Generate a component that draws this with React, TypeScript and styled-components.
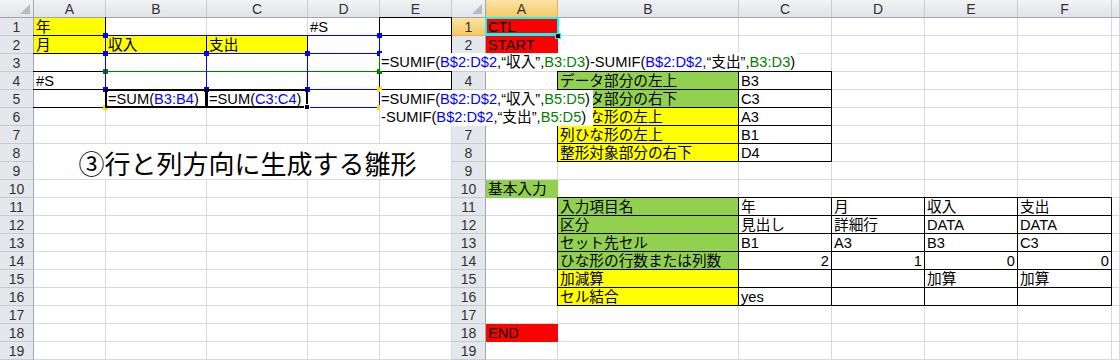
import { ReactNode } from "react";
import styled, { createGlobalStyle, css } from "styled-components";

const GRID = "#d9d9d9";
const YEL = "#ffff00";
const GRN = "#92d050";
const RED = "#ff0000";
const BLUE = "#0000ff";
const GREEN = "#007f00";
const ROW_H = 18;
const ROWS = 19;

const GlobalStyle = createGlobalStyle`
  * { box-sizing: border-box; }
  html, body { margin: 0; padding: 0; background: #fff; }
  body { font-family: "Liberation Sans", "Noto Sans CJK JP", sans-serif; }
`;

type CellDef = {
  text?: ReactNode;
  fill?: string;
  edges?: string;
  heavy?: boolean;
  right?: boolean;
  span?: [number, number];
  title?: boolean;
};

type Rect = { left: number; top: number; width: number; height: number };

const Page = styled.div`
  position: relative;
  display: flex;
  width: 1120px;
  height: 360px;
  overflow: hidden;
  background: #fff;
`;

const SheetFrame = styled.div<{ $cols: number[] }>`
  position: relative;
  flex: none;
  display: grid;
  grid-template-columns: ${({ $cols }) => $cols.map((w) => `${w}px`).join(" ")};
  grid-template-rows: repeat(${ROWS + 1}, ${ROW_H}px);
  width: ${({ $cols }) => $cols.reduce((a, b) => a + b, 0)}px;
  height: 360px;
  overflow: hidden;
`;

const Corner = styled.div`
  grid-column: 1;
  grid-row: 1;
  display: flex;
  align-items: flex-end;
  justify-content: flex-end;
  padding: 0 3px 3px 0;
  background: linear-gradient(#f2f3f5, #e2e5e9);
  border-right: 1px solid #9ea6b1;
  border-bottom: 1px solid #9ea6b1;
`;

const CornerMark = styled.span`
  width: 0;
  height: 0;
  border-left: 10px solid transparent;
  border-bottom: 10px solid #b7bcc3;
`;

const ColHead = styled.div<{ $col: number; $active?: boolean }>`
  grid-column: ${({ $col }) => $col};
  grid-row: 1;
  display: flex;
  align-items: center;
  justify-content: center;
  background: ${({ $active }) =>
    $active ? "linear-gradient(#fbe3a6, #f5c965)" : "linear-gradient(#f1f3f5, #e0e3e8)"};
  border-right: 1px solid ${({ $active }) => ($active ? "#e3b453" : "#c6cbd2")};
  border-bottom: 1px solid ${({ $active }) => ($active ? "#dba545" : "#9ea6b1")};
  color: #333;
  font-size: 14px;
  overflow: hidden;
`;

const RowHead = styled.div<{ $row: number; $active?: boolean }>`
  grid-column: 1;
  grid-row: ${({ $row }) => $row};
  display: flex;
  align-items: center;
  justify-content: center;
  background: ${({ $active }) =>
    $active ? "linear-gradient(#fbe3a6, #f5c965)" : "#e4e7eb"};
  border-right: 1px solid ${({ $active }) => ($active ? "#dba545" : "#9ea6b1")};
  border-bottom: 1px solid ${({ $active }) => ($active ? "#e3b453" : "#c6cbd2")};
  color: #333;
  font-size: 14px;
`;

const edgeWidths = (edges: string) =>
  ["t", "r", "b", "l"].map((e) => (edges.includes(e) ? "1px" : "0")).join(" ");

const Cell = styled.div<{
  $col: number;
  $row: number;
  $sc: number;
  $sr: number;
  $fill?: string;
  $edges?: string;
  $heavy?: boolean;
  $right?: boolean;
  $title?: boolean;
}>`
  position: relative;
  grid-column: ${({ $col, $sc }) => `${$col} / span ${$sc}`};
  grid-row: ${({ $row, $sr }) => `${$row} / span ${$sr}`};
  display: flex;
  align-items: ${({ $title }) => ($title ? "center" : "flex-end")};
  justify-content: ${({ $title, $right }) =>
    $title ? "center" : $right ? "flex-end" : "flex-start"};
  padding: 0 2px;
  background: ${({ $fill }) => $fill ?? "#fff"};
  border-right: 1px solid ${({ $fill }) => $fill ?? GRID};
  border-bottom: 1px solid ${({ $fill }) => $fill ?? GRID};
  color: #000;
  font-size: 14.67px;
  line-height: 15px;
  white-space: nowrap;

  ${({ $title }) =>
    $title &&
    css`
      font-family: "Noto Sans CJK JP", sans-serif;
      font-size: 26px;
      line-height: 30px;
      padding: 2px 0 0 10px;
    `}

  ${({ $edges, $heavy }) =>
    ($edges || $heavy) &&
    css`
      &::after {
        content: "";
        position: absolute;
        left: -1px;
        top: -1px;
        right: -1px;
        bottom: -1px;
        z-index: ${$heavy ? 4 : 2};
        border: solid #000;
        border-width: ${$heavy ? "2px" : edgeWidths($edges ?? "")};
        pointer-events: none;
      }
    `}
`;

const RangeBox = styled.div<{ $color: string }>`
  position: absolute;
  z-index: 3;
  border: 1px solid ${({ $color }) => $color};
  pointer-events: none;
`;

const Handle = styled.span<{ $color: string; $x: "left" | "right"; $y: "top" | "bottom" }>`
  position: absolute;
  width: 5px;
  height: 5px;
  background: ${({ $color }) => $color};
  ${({ $x }) => $x}: -3px;
  ${({ $y }) => $y}: -3px;
`;

const Selection = styled.div`
  position: absolute;
  z-index: 5;
  border: 2px solid #00ffff;
  border-bottom-width: 3px;
  pointer-events: none;
`;

const FillHandle = styled.span<{ $ring?: string }>`
  position: absolute;
  z-index: 6;
  width: 6px;
  height: 6px;
  background: #000;
  border: 1px solid ${({ $ring }) => $ring ?? "#fff"};
`;

const FormulaBox = styled.div<{ $top: number }>`
  position: absolute;
  z-index: 10;
  left: 380px;
  top: ${({ $top }) => $top}px;
  padding: 0 3px 0 1px;
  background: #fff;
  color: #000;
  font-size: 14.67px;
  line-height: 18px;
  white-space: nowrap;
`;

const Ref = styled.span<{ $tone: "blue" | "green" }>`
  color: ${({ $tone }) => ($tone === "blue" ? BLUE : GREEN)};
`;

const parseKey = (key: string) => ({
  col: key.charCodeAt(0) - 64,
  row: Number(key.slice(1)),
});

const cellRect = (widths: number[], c1: number, r1: number, c2: number, r2: number): Rect => {
  const x = (c: number) => widths.slice(0, c).reduce((a, b) => a + b, 0) - 1;
  const left = x(c1);
  const right = x(c2 + 1);
  const top = ROW_H + (r1 - 1) * ROW_H - 1;
  const bottom = ROW_H + r2 * ROW_H - 1;
  return { left, top, width: right - left + 1, height: bottom - top + 1 };
};

type SheetProps = {
  widths: number[];
  labels: string[];
  cells: Record<string, CellDef>;
  activeCol?: number;
  activeRow?: number;
  children?: ReactNode;
};

const Sheet = ({ widths, labels, cells, activeCol, activeRow, children }: SheetProps) => {
  const covered = new Set<string>();
  Object.entries(cells).forEach(([key, def]) => {
    if (!def.span) return;
    const { col, row } = parseKey(key);
    for (let dc = 0; dc < def.span[0]; dc++)
      for (let dr = 0; dr < def.span[1]; dr++)
        if (dc || dr) covered.add(`${col + dc}:${row + dr}`);
  });

  const items: ReactNode[] = [];
  for (let r = 1; r <= ROWS; r++) {
    items.push(
      <RowHead key={`rh${r}`} $row={r + 1} $active={activeRow === r}>
        {r}
      </RowHead>
    );
    labels.forEach((label, i) => {
      const c = i + 1;
      if (covered.has(`${c}:${r}`)) return;
      const def = cells[`${label}${r}`] ?? {};
      items.push(
        <Cell
          key={`${label}${r}`}
          $col={c + 1}
          $row={r + 1}
          $sc={def.span?.[0] ?? 1}
          $sr={def.span?.[1] ?? 1}
          $fill={def.fill}
          $edges={def.edges}
          $heavy={def.heavy}
          $right={def.right}
          $title={def.title}
        >
          {def.text}
        </Cell>
      );
    });
  }

  return (
    <SheetFrame $cols={widths}>
      <Corner>
        <CornerMark />
      </Corner>
      {labels.map((label, i) => (
        <ColHead key={label} $col={i + 2} $active={activeCol === i + 1}>
          {widths[i + 1] > 20 ? label : null}
        </ColHead>
      ))}
      {items}
      {children}
    </SheetFrame>
  );
};

const Range = ({ rect, color, corner }: { rect: Rect; color: string; corner?: string }) => (
  <RangeBox $color={color} style={rect}>
    <Handle $color={corner ?? color} $x='left' $y='top' />
    <Handle $color={corner ?? color} $x='right' $y='top' />
    <Handle $color={corner ?? color} $x='left' $y='bottom' />
    <Handle $color={corner ?? color} $x='right' $y='bottom' />
  </RangeBox>
);

const LEFT_W = [34, 72, 101, 101, 72, 72];
const LEFT_L = ["A", "B", "C", "D", "E"];
const RIGHT_W = [34, 72, 181, 93, 93, 93, 94, 8];
const RIGHT_L = ["A", "B", "C", "D", "E", "F", "G"];

const box = "trbl";

const leftCells: Record<string, CellDef> = {
  A1: { text: "年", fill: YEL, edges: "rb" },
  A2: { text: "月", fill: YEL, edges: "trb" },
  A3: { edges: "trb" },
  A4: { text: "#S", edges: "trb" },
  A5: { edges: "trb" },
  B2: { text: "収入", fill: YEL, edges: box },
  C2: { text: "支出", fill: YEL, edges: box },
  D1: { text: "#S", edges: "r" },
  D2: { edges: box },
  B3: { edges: box },
  C3: { edges: box },
  D3: { edges: box },
  B4: { edges: box },
  C4: { edges: box },
  D4: { edges: box },
  B5: {
    text: (
      <>
        =SUM(<Ref $tone='blue'>B3:B4</Ref>)
      </>
    ),
    heavy: true,
  },
  C5: {
    text: (
      <>
        =SUM(<Ref $tone='blue'>C3:C4</Ref>)
      </>
    ),
    heavy: true,
  },
  D5: { edges: box },
  E1: { edges: box },
  E2: { edges: box },
  E3: { edges: box },
  E4: { edges: box },
  E5: { edges: box },
  A8: { text: "③行と列方向に生成する雛形", span: [5, 2], title: true },
};

const settings: [string, string, string][] = [
  ["データ部分の左上", GRN, "B3"],
  ["データ部分の右下", GRN, "C3"],
  ["行ひな形の左上", YEL, "A3"],
  ["列ひな形の左上", YEL, "B1"],
  ["整形対象部分の右下", YEL, "D4"],
];

const inputs: [string, string, string[], boolean?][] = [
  ["入力項目名", GRN, ["年", "月", "収入", "支出"]],
  ["区分", GRN, ["見出し", "詳細行", "DATA", "DATA"]],
  ["セット先セル", GRN, ["B1", "A3", "B3", "C3"]],
  ["ひな形の行数または列数", GRN, ["2", "1", "0", "0"], true],
  ["加減算", YEL, ["", "", "加算", "加算"]],
  ["セル結合", YEL, ["yes", "", "", ""]],
];

const rightCells: Record<string, CellDef> = {
  A1: { text: "CTL", fill: RED },
  A2: { text: "START", fill: RED },
  A10: { text: "基本入力", fill: GRN },
  A18: { text: "END", fill: RED },
};
settings.forEach(([label, fill, value], i) => {
  rightCells[`B${4 + i}`] = { text: label, fill, edges: box };
  rightCells[`C${4 + i}`] = { text: value, edges: box };
});
inputs.forEach(([label, fill, values, right], i) => {
  rightCells[`B${11 + i}`] = { text: label, fill, edges: box };
  values.forEach((v, j) => {
    rightCells[`${"CDEF"[j]}${11 + i}`] = { text: v, edges: box, right };
  });
});

const c5 = cellRect(LEFT_W, 3, 5, 3, 5);
const a1 = cellRect(RIGHT_W, 1, 1, 1, 1);

const App = (): JSX.Element => (
  <Page>
    <GlobalStyle />
    <Sheet widths={LEFT_W} labels={LEFT_L} cells={leftCells}>
      <Range rect={cellRect(LEFT_W, 2, 3, 4, 3)} color={GREEN} />
      <Range rect={cellRect(LEFT_W, 2, 5, 4, 5)} color={BLUE} corner='#ffd800' />
      <Range rect={cellRect(LEFT_W, 2, 2, 4, 2)} color={BLUE} />
      <Range rect={cellRect(LEFT_W, 2, 3, 2, 4)} color={BLUE} />
      <Range rect={cellRect(LEFT_W, 3, 3, 3, 4)} color={BLUE} />
      <FillHandle style={{ left: c5.left + c5.width - 4, top: c5.top + c5.height - 4 }} />
    </Sheet>
    <Sheet widths={RIGHT_W} labels={RIGHT_L} cells={rightCells} activeCol={1} activeRow={1}>
      <Selection style={{ ...a1, width: a1.width + 1 }} />
      <FillHandle
        $ring='#00ffff'
        style={{ left: a1.left + a1.width - 3, top: a1.top + a1.height - 3 }}
      />
    </Sheet>
    <FormulaBox $top={53}>
      =SUMIF(<Ref $tone='blue'>B$2:D$2</Ref>,“収入”,<Ref $tone='green'>B3:D3</Ref>)-SUMIF(
      <Ref $tone='blue'>B$2:D$2</Ref>,“支出”,<Ref $tone='green'>B3:D3</Ref>)
    </FormulaBox>
    <FormulaBox $top={90}>
      =SUMIF(<Ref $tone='blue'>B$2:D$2</Ref>,“収入”,<Ref $tone='green'>B5:D5</Ref>)
      <br />
      -SUMIF(<Ref $tone='blue'>B$2:D$2</Ref>,“支出”,<Ref $tone='green'>B5:D5</Ref>)
    </FormulaBox>
  </Page>
);

export default App;
